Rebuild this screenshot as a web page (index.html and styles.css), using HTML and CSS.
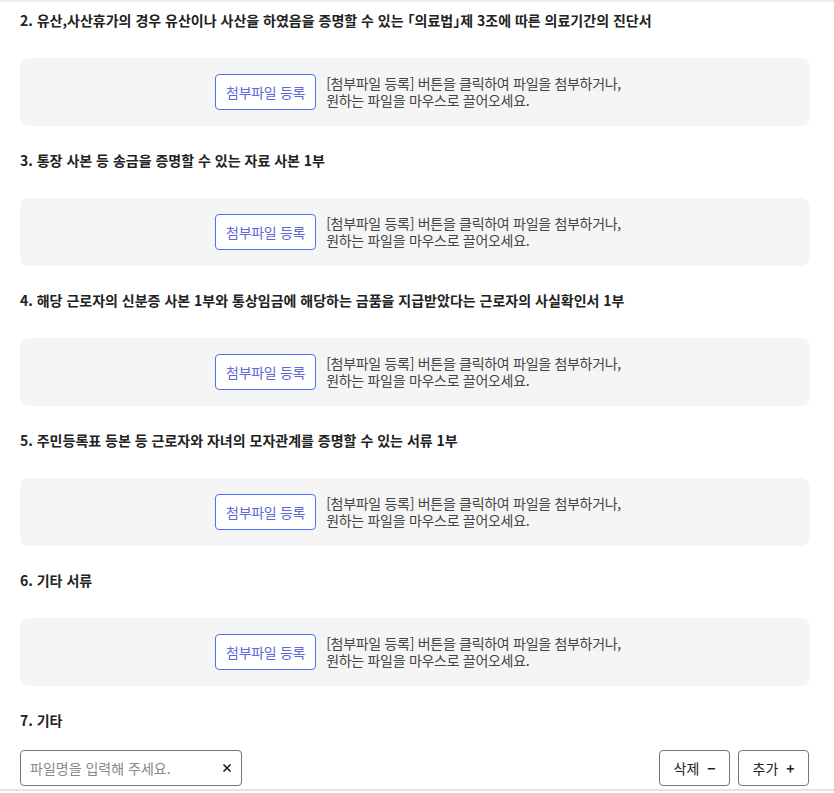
FILE: index.html
```html
<!DOCTYPE html>
<html lang="ko">
<head>
    <meta charset="UTF-8">
    <meta name="viewport" content="width=device-width, initial-scale=1.0">
    <title>첨부서류 등록</title>
    <link rel="stylesheet" href="styles.css">
</head>
<body>

<div class="attach-list">
    <div class="attach-item">
        <h3 class="attach-title">2. 유산,사산휴가의 경우 유산이나 사산을 하였음을 증명할 수 있는 「의료법」제 3조에 따른 의료기간의 진단서</h3>
        <div class="drop-box">
            <button class="btn-file">첨부파일 등록</button>
            <p class="drop-guide">[첨부파일 등록] 버튼을 클릭하여 파일을 첨부하거나,<br>원하는 파일을 마우스로 끌어오세요.</p>
        </div>
    </div>
    <div class="attach-item">
        <h3 class="attach-title">3. 통장 사본 등 송금을 증명할 수 있는 자료 사본 1부</h3>
        <div class="drop-box">
            <button class="btn-file">첨부파일 등록</button>
            <p class="drop-guide">[첨부파일 등록] 버튼을 클릭하여 파일을 첨부하거나,<br>원하는 파일을 마우스로 끌어오세요.</p>
        </div>
    </div>
    <div class="attach-item">
        <h3 class="attach-title">4. 해당 근로자의 신분증 사본 1부와 통상임금에 해당하는 금품을 지급받았다는 근로자의 사실확인서 1부</h3>
        <div class="drop-box">
            <button class="btn-file">첨부파일 등록</button>
            <p class="drop-guide">[첨부파일 등록] 버튼을 클릭하여 파일을 첨부하거나,<br>원하는 파일을 마우스로 끌어오세요.</p>
        </div>
    </div>
    <div class="attach-item">
        <h3 class="attach-title">5. 주민등록표 등본 등 근로자와 자녀의 모자관계를 증명할 수 있는 서류 1부</h3>
        <div class="drop-box">
            <button class="btn-file">첨부파일 등록</button>
            <p class="drop-guide">[첨부파일 등록] 버튼을 클릭하여 파일을 첨부하거나,<br>원하는 파일을 마우스로 끌어오세요.</p>
        </div>
    </div>
    <div class="attach-item">
        <h3 class="attach-title">6. 기타 서류</h3>
        <div class="drop-box">
            <button class="btn-file">첨부파일 등록</button>
            <p class="drop-guide">[첨부파일 등록] 버튼을 클릭하여 파일을 첨부하거나,<br>원하는 파일을 마우스로 끌어오세요.</p>
        </div>
    </div>
    <div class="attach-item">
        <h3 class="attach-title">7. 기타</h3>
        <div class="etc-row">
            <div class="file-input">
                <input type="text" placeholder="파일명을 입력해 주세요.">
                <button class="btn-clear" aria-label="지우기">
                    <svg width="10" height="10" viewBox="0 0 10 10"><path d="M1.5 1.5l7 7M8.5 1.5l-7 7" stroke="#222" stroke-width="1.7" fill="none"/></svg>
                </button>
            </div>
            <div class="etc-btns">
                <button class="btn-line">삭제 <span class="sign">−</span></button>
                <button class="btn-line">추가 <span class="sign">+</span></button>
            </div>
        </div>
    </div>
</div>

</body>
</html>
```

FILE: styles.css
```css
body {
    margin: 0;
    font-family: "Noto Sans CJK KR", "Noto Sans", sans-serif;
    color: #222;
    background-color: #fff;
}
.attach-list {
    border-top: 2px solid #ececec;
    border-bottom: 2px solid #e4e4e4;
    padding: 8px 24px 0 20px;
    height: 779px;
}
.attach-item {
    margin-bottom: 24px;
}
.attach-title {
    margin: 0 0 28px;
    font-size: 14px;
    line-height: 20px;
    font-weight: bold;
    color: #222;
    font-feature-settings: "halt";
}
.drop-box {
    display: flex;
    justify-content: center;
    align-items: center;
    gap: 10px;
    height: 68px;
    padding-left: 6px;
    background-color: #f5f5f5;
    border-radius: 8px;
    letter-spacing: -0.3px;
}
.btn-file {
    height: 36px;
    padding: 0 10px;
    background-color: #fff;
    border: 1px solid #4f6ef0;
    border-radius: 4px;
    color: #5f68d6;
    font-family: inherit;
    font-size: 14px;
    letter-spacing: -0.3px;
    cursor: pointer;
}
.drop-guide {
    margin: 0;
    font-size: 14px;
    line-height: 17px;
    color: #444;
}
.etc-row {
    display: flex;
    justify-content: space-between;
    align-items: center;
    margin-top: -8px;
}
.file-input {
    display: flex;
    align-items: center;
    box-sizing: border-box;
    width: 222px;
    height: 36px;
    border: 1px solid #777;
    border-radius: 4px;
    padding: 0 9px 0 9px;
}
.file-input input {
    flex: 1;
    min-width: 0;
    padding: 0;
    border: none;
    outline: none;
    font-family: inherit;
    font-size: 14px;
    color: #222;
}
.file-input input::placeholder {
    color: #888;
}
.btn-clear {
    display: flex;
    border: none;
    background: none;
    padding: 0;
    cursor: pointer;
}
.etc-btns {
    display: flex;
    gap: 8px;
    margin-right: 1px;
}
.btn-line {
    width: 71px;
    height: 36px;
    background-color: #fff;
    border: 1px solid #777;
    border-radius: 4px;
    font-family: inherit;
    font-size: 14px;
    color: #222;
    cursor: pointer;
}
.btn-line .sign {
    margin-left: 4px;
    font-weight: bold;
}
```
